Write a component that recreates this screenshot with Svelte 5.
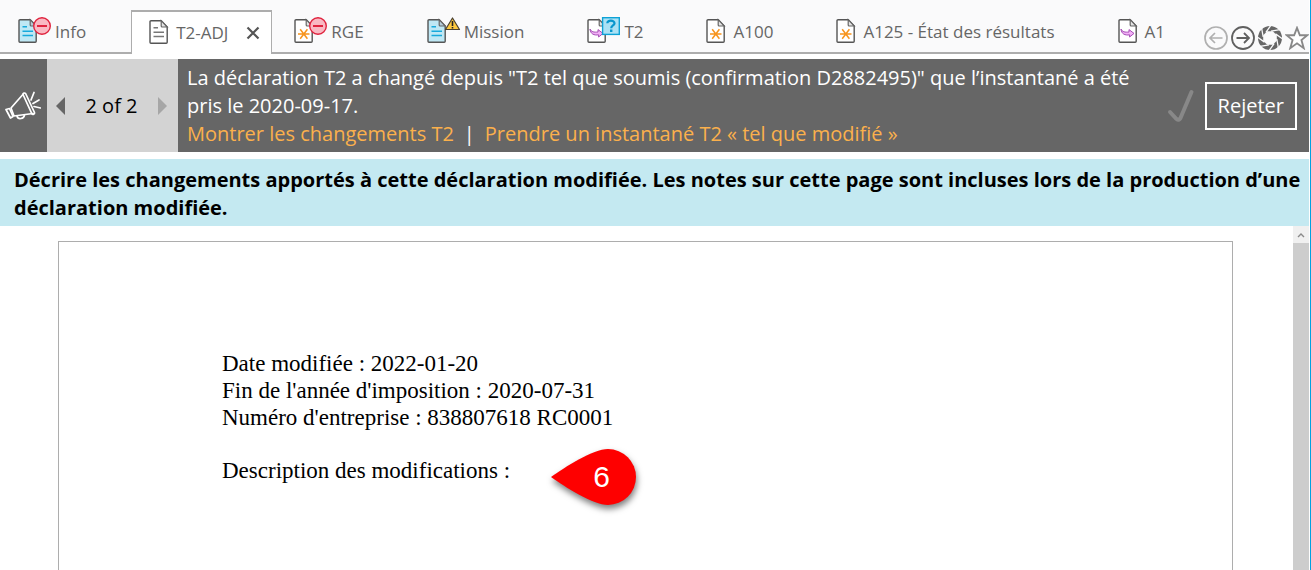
<script lang="ts">
  type Tab = {
    label: string;
    glyph: 'lines' | 'star' | 'arrow';
    filled?: boolean;
    badge?: 'minus' | 'warning' | 'question';
  };

  const tabs: Tab[] = [
    { label: 'Info', glyph: 'lines', filled: true, badge: 'minus' },
    { label: 'T2-ADJ', glyph: 'lines' },
    { label: 'RGE', glyph: 'star', badge: 'minus' },
    { label: 'Mission', glyph: 'lines', filled: true, badge: 'warning' },
    { label: 'T2', glyph: 'arrow', badge: 'question' },
    { label: 'A100', glyph: 'star' },
    { label: 'A125 - État des résultats', glyph: 'star' },
    { label: 'A1', glyph: 'arrow' },
  ];

  let active = $state('T2-ADJ');
</script>

{#snippet docIcon(tab: Tab)}
  <svg class="doc-icon" width={tab.badge ? 34 : 24} height="28" viewBox="0 0 {tab.badge ? 34 : 24} 28" aria-hidden="true">
    <path
      d="M2 2.7H12.2L18.2 9V24.2a1 1 0 0 1-1 1H2a1 1 0 0 1-1-1V3.7a1 1 0 0 1 1-1z"
      fill={tab.filled ? '#bfe8f5' : '#fff'}
      stroke="#555"
      stroke-width="1.4"
    />
    <path d="M12.2 2.7V8a1 1 0 0 0 1 1H18.2z" fill={tab.filled ? '#b5cbd9' : '#e4e4e4'} stroke="#666" stroke-width="1.2" />
    {#if tab.glyph === 'lines'}
      <path d="M4.5 9.7H9M4.5 14.2H15M4.5 18.5H15" fill="none" stroke={tab.filled ? '#17a9dc' : '#777'} stroke-width="1.4" />
    {:else if tab.glyph === 'star'}
      <path d="M4 17H15.5M6.2 12.2L13.4 21.8M13.4 12.2L6.2 21.8" fill="none" stroke="#f7941d" stroke-width="1.5" />
    {:else}
      <path
        d="M3 12C4.2 15 7 15.4 11 15V12.6L16 16.4L11.6 20V17.8C7 18.6 3.4 17 3 12z"
        fill="#f3b0f7"
        stroke="#a54fb5"
        stroke-width="1"
      />
    {/if}
    {#if tab.badge === 'minus'}
      <circle cx="24" cy="9" r="8.3" fill="#f9b9c3" stroke="#e0243f" stroke-width="1.4" />
      <path d="M19 9H29" stroke="#e0243f" stroke-width="2" />
    {:else if tab.badge === 'warning'}
      <path d="M25.5 1L32.5 12.5H18.5z" fill="#fdc83e" stroke="#4a4130" stroke-width="1.2" stroke-linejoin="round" />
      <path d="M25.5 4V9M25.5 10V11.5" stroke="#222" stroke-width="1.6" />
    {:else if tab.badge === 'question'}
      <rect x="15.6" y="0.7" width="16.7" height="16.7" fill="#abe1f4" stroke="#0da2d6" stroke-width="1.4" />
      <path d="M20.3 6.2C20.3 2.8 27.6 2.9 27.5 6.4C27.4 8.6 24.2 8.4 24.2 11.2" fill="none" stroke="#0796cd" stroke-width="2.2" />
      <path d="M24.2 12.5V15" stroke="#0796cd" stroke-width="2.4" />
    {/if}
  </svg>
{/snippet}

<div class="app">
  <header class="tab-bar">
    <div class="tabs">
      {#each tabs as tab}
        <div class="tab" class:active={tab.label === active}>
          <button class="tab-select" onclick={() => (active = tab.label)}>
            {@render docIcon(tab)}
            <span>{tab.label}</span>
          </button>
          {#if tab.label === active}
            <button class="tab-close" aria-label="Fermer">
              <svg width="14" height="14" viewBox="0 0 14 14">
                <path d="M1.5 1.5L12.5 12.5M12.5 1.5L1.5 12.5" stroke="#555" stroke-width="2.2" />
              </svg>
            </button>
          {/if}
        </div>
      {/each}
    </div>

    <nav class="tools" aria-label="Navigation">
      <button aria-label="Précédent" disabled>
        <svg width="24" height="24" viewBox="0 0 24 24" fill="none" stroke="#b0b0b0" stroke-width="1.7">
          <circle cx="12" cy="12" r="11" />
          <path d="M18.5 12H6M11 7L6 12L11 17" />
        </svg>
      </button>
      <button aria-label="Suivant">
        <svg width="24" height="24" viewBox="0 0 24 24" fill="none" stroke="#606060" stroke-width="1.8">
          <circle cx="12" cy="12" r="11" />
          <path d="M5.5 12H18M13 7L18 12L13 17" />
        </svg>
      </button>
      <button aria-label="Instantané">
        <svg width="24" height="24" viewBox="0 0 24 24">
          <circle cx="12" cy="12" r="12" fill="#666" />
          <path d="M9.2 5.2H14.8L18.8 9.2V14.8L14.8 18.8H9.2L5.2 14.8V9.2z" fill="#fafafb" />
          <g stroke="#fafafb" stroke-width="1.3">
            {#each [0, 45, 90, 135, 180, 225, 270, 315] as angle}
              <path d="M13 5.2L22 3.6" transform="rotate({angle} 12 12)" />
            {/each}
          </g>
        </svg>
      </button>
      <button aria-label="Favoris">
        <svg width="24" height="24" viewBox="0 0 26 26">
          <path
            d="M13 2L16.1 10H24.2L17.8 15.3L20.3 24L13 18.8L5.7 24L8.2 15.3L1.8 10H9.9z"
            fill="#fff"
            stroke="#888"
            stroke-width="2"
          />
        </svg>
      </button>
    </nav>
  </header>

  <section class="notice">
    <div class="notice-icon">
      <svg width="36" height="30" viewBox="0 0 36 30" fill="none" stroke="#fff" stroke-width="1.7" stroke-linejoin="round" stroke-linecap="round">
        <path d="M18.5 2.8L6 17L9 25L28 22.5" />
        <path d="M18 3.5a1.5 1.5 0 0 1 2.6-1L29.5 21.5a1.5 1.5 0 0 1-2.7 1.2z" />
        <path d="M1 18.5L4.5 17.5L8 25.5L5.5 27z" />
        <path d="M12 25C13 29 19 28 19.5 23.8" />
        <path d="M26 9L29 1.5M28 12.5L34 9M29 15.5L35.5 17" />
      </svg>
    </div>
    <div class="pager">
      <button aria-label="Avis précédent"><span class="triangle left"></span></button>
      <span>2 of 2</span>
      <button aria-label="Avis suivant" disabled><span class="triangle right"></span></button>
    </div>
    <div class="notice-body">
      <p>
        La déclaration T2 a changé depuis "T2 tel que soumis (confirmation D2882495)" que l’instantané a été pris le
        2020-09-17.
      </p>
      <p class="notice-links">
        <a href="#changements">Montrer les changements T2</a>
        <span>|</span>
        <a href="#instantane">Prendre un instantané T2 « tel que modifié »</a>
      </p>
    </div>
    <svg class="check" width="28" height="36" viewBox="0 0 28 36" aria-hidden="true">
      <path d="M3 24L9.5 31Q12 33 13.5 30L24.5 4" fill="none" stroke="#888" stroke-width="4" stroke-linecap="round" />
    </svg>
    <button class="dismiss">Rejeter</button>
  </section>

  <p class="instructions">
    Décrire les changements apportés à cette déclaration modifiée. Les notes sur cette page sont incluses lors de la
    production d’une déclaration modifiée.
  </p>

  <main class="viewer">
    <article class="paper">
      <p>Date modifiée : 2022-01-20</p>
      <p>Fin de l'année d'imposition : 2020-07-31</p>
      <p>Numéro d'entreprise : 838807618 RC0001</p>
      <p class="description">
        Description des modifications :
        <span class="pin">
          <svg width="85" height="56" viewBox="0 0 85 56" aria-hidden="true">
            <path d="M0 28C14 18 42 0 57 0A28 28 0 0 1 57 56C42 56 14 38 0 28z" fill="#fe0000" />
          </svg>
          <span class="pin-number">6</span>
        </span>
      </p>
    </article>
    <div class="scrollbar">
      <button aria-label="Défiler vers le haut">
        <svg width="8" height="6" viewBox="0 0 8 6">
          <path d="M1 5L4 2L7 5" fill="none" stroke="#8a8a8a" stroke-width="1.4" />
        </svg>
      </button>
      <div class="thumb"></div>
    </div>
  </main>
</div>

<style>
  :global(body) {
    background: #fff;
  }

  .app {
    box-sizing: border-box;
    height: 100vh;
    display: flex;
    flex-direction: column;
    border-right: 1px solid #00a2e0;
    padding-right: 1px;
    overflow: hidden;
    font-family: 'Open Sans', 'Noto Sans', sans-serif;
    font-size: 20px;
    line-height: 28px;
    color: #000;
  }

  p {
    margin: 0;
  }

  button {
    border: none;
    background: none;
    padding: 0;
    font: inherit;
    color: inherit;
    cursor: pointer;
  }

  .tab-bar {
    display: flex;
    flex: none;
    background: #fafafb;
    box-shadow: inset 0 -2px #adadad;
  }

  .tabs {
    display: flex;
    flex: 1;
    min-width: 0;
    padding-top: 10px;
    overflow: hidden;
    font-size: 17px;
    color: #666;
  }

  .tab {
    box-sizing: border-box;
    display: flex;
    align-items: center;
    flex: none;
    height: 44px;
    padding: 0 45px 0 18px;
  }

  .tab.active {
    gap: 18px;
    margin-right: 4px;
    padding: 0 11px 0 17px;
    background: #fff;
    border: 2px solid #adadad;
    border-width: 2px 1px 0;
  }

  .tab-select {
    display: flex;
    align-items: center;
    gap: 3px;
    white-space: nowrap;
  }

  .doc-icon {
    flex: none;
    margin-bottom: 2px;
  }

  .tab-close {
    display: flex;
  }

  .tools {
    display: flex;
    align-items: center;
    gap: 3px;
    padding-top: 22px;
  }

  .tools button {
    display: flex;
  }

  .notice {
    display: flex;
    align-items: center;
    flex: none;
    margin-top: 5px;
    background: #666;
    color: #fff;
  }

  .notice-icon {
    box-sizing: border-box;
    width: 47px;
    padding-left: 5px;
  }

  .notice-icon svg {
    display: block;
  }

  .pager {
    box-sizing: border-box;
    align-self: stretch;
    display: flex;
    align-items: center;
    justify-content: space-between;
    flex: none;
    width: 131px;
    padding: 0 11px 0 9px;
    background: #d3d3d3;
    color: #000;
  }

  .triangle {
    display: block;
    border: 9px solid transparent;
    border-width: 9px 0;
  }

  .triangle.left {
    border-right: 9px solid #666;
  }

  .triangle.right {
    border-left: 9px solid #a6a6a6;
  }

  .notice-body {
    flex: 1;
    padding: 5px 24px 4px 9px;
  }

  .notice-links {
    display: flex;
    gap: 10px;
  }

  .notice-links a {
    color: #fbb04c;
    text-decoration: none;
  }

  .check {
    flex: none;
  }

  .dismiss {
    flex: none;
    margin: 0 12px 0 10px;
    padding: 8px 11px;
    border: 2px solid #fff;
  }

  .instructions {
    flex: none;
    margin-top: 7px;
    padding: 7px 4px 4px 14px;
    background: #c4e9f1;
    font-weight: 700;
  }

  .viewer {
    display: flex;
    flex: 1;
    min-height: 0;
  }

  .paper {
    flex: 1;
    margin: 15px 60px 0 58px;
    padding: 108px 163px 0;
    border: 1px solid #adadad;
    border-bottom: none;
    font-family: 'Liberation Serif', serif;
    font-size: 23px;
    line-height: 27px;
  }

  .description {
    position: relative;
    width: max-content;
    margin-top: 26px;
  }

  .pin {
    position: absolute;
    left: 100%;
    top: 50%;
    width: 85px;
    height: 56px;
    margin: -22px 0 0 41px;
  }

  .pin svg {
    display: block;
    overflow: visible;
    filter: drop-shadow(1px 4px 3px rgba(0, 0, 0, 0.5));
  }

  .pin-number {
    position: absolute;
    inset: 0 0 0 16px;
    color: #fff;
    font-family: 'Liberation Sans', sans-serif;
    font-size: 30px;
    line-height: 56px;
    text-align: center;
  }

  .scrollbar {
    display: flex;
    flex-direction: column;
    flex: none;
    width: 16px;
  }

  .scrollbar button {
    display: flex;
    align-items: center;
    justify-content: center;
    height: 17px;
    background: #f0f0f0;
  }

  .thumb {
    flex: 1;
    background: #cdcdcd;
  }
</style>
